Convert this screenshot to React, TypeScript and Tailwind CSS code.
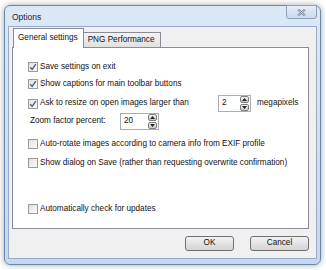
import React, { useState } from 'react';

const FONT = { fontFamily: '"Liberation Sans", Arial, sans-serif' };

function CheckBox({ checked }: { checked: boolean }) {
  return (
    <span className="w-[10px] h-[10px] shrink-0 border border-[#9a9a9a] bg-gradient-to-br from-[#e0e0e0] to-[#fcfcfc] flex items-center justify-center">
      {checked && (
        <svg width="8" height="8" viewBox="0 0 8 8">
          <path d="M1.2 4.2 L3.2 6.4 L6.8 1.2" fill="none" stroke="#4a5f97" strokeWidth="1.4" />
        </svg>
      )}
    </span>
  );
}

function Option({ label, checked }: { label: string; checked: boolean }) {
  return (
    <div className="flex items-center gap-[2px] h-[14px] pl-[15px]">
      <CheckBox checked={checked} />
      <span>{label}</span>
    </div>
  );
}

function SpinBox({ value, width }: { value: string; width: string }) {
  return (
    <div className={`${width} h-[17px] border border-[#abadb3] bg-white flex items-center justify-between pl-[3px] pr-[1px]`}>
      <span>{value}</span>
      <div className="flex flex-col gap-[1px]">
        <span className="w-[9px] h-[7px] rounded-[2px] border border-[#7d7d7d] bg-gradient-to-b from-[#f4f4f4] to-[#c9c9c9] flex items-center justify-center">
          <svg width="5" height="3" viewBox="0 0 5 3"><path d="M0 3 L2.5 0 L5 3 Z" fill="#222" /></svg>
        </span>
        <span className="w-[9px] h-[7px] rounded-[2px] border border-[#7d7d7d] bg-gradient-to-b from-[#f4f4f4] to-[#c9c9c9] flex items-center justify-center">
          <svg width="5" height="3" viewBox="0 0 5 3"><path d="M0 0 L2.5 3 L5 0 Z" fill="#222" /></svg>
        </span>
      </div>
    </div>
  );
}

export default function App() {
  const [tab] = useState(0);

  return (
    <div className="w-[326px] h-[270px] bg-white pt-[5px] pl-[4px] text-[8.2px] text-[#111]" style={FONT}>
      <div className="w-[317px] h-[260px] rounded-[6px] border border-[#6b86ab] bg-gradient-to-b from-[#dbe8f7] to-[#c6d8ef] shadow-[0_0_6px_rgba(0,0,0,0.35)] flex flex-col px-[3px] pb-[5px]">
        {/* title bar */}
        <div className="h-[20px] flex items-start justify-between shrink-0">
          <span className="pl-[4px] pt-[5px] text-[8.5px] text-[#1e1e1e]">Options</span>
          <div className="w-[31px] h-[14px] -mt-px rounded-b-[3px] border border-[#8ea2bd] bg-gradient-to-b from-[#e6eef8] to-[#cbd9ec] flex items-center justify-center">
            <svg width="9" height="7" viewBox="0 0 9 7">
              <path d="M1 0.5 L8 6.5 M8 0.5 L1 6.5" stroke="#6f7f95" strokeWidth="2.2" />
              <path d="M1 0.5 L8 6.5 M8 0.5 L1 6.5" stroke="#e8eef6" strokeWidth="0.8" />
            </svg>
          </div>
        </div>

        {/* client area */}
        <div className="flex-1 border border-[#97abc6] bg-[#f0f0f0] flex flex-col pl-[3px] pr-[7px]">
          <div className="flex items-end h-[20px] pl-px">
            <div className={`h-[20px] pl-[4px] pr-[5px] bg-white border border-b-0 border-[#898c95] flex items-center relative top-px ${tab === 0 ? 'z-10' : ''}`}>
              General settings
            </div>
            <div className="h-[15px] pl-[4px] pr-[5px] bg-gradient-to-b from-[#f3f3f3] to-[#e1e1e1] border border-l-0 border-b-0 border-[#898c95] flex items-center">
              PNG Performance
            </div>
          </div>

          <div className="h-[182px] bg-white border border-[#898c95] flex flex-col pt-[12px]">
            <Option checked label="Save settings on exit" />
            <div className="mt-[3px]">
              <Option checked label="Show captions for main toolbar buttons" />
            </div>
            <div className="mt-[4px] flex items-center h-[17px] pl-[15px]">
              <CheckBox checked />
              <span className="ml-[2px] w-[178px]">Ask to resize on open images larger than</span>
              <SpinBox value="2" width="w-[33px]" />
              <span className="ml-[6px]">megapixels</span>
            </div>
            <div className="mt-px flex items-center h-[17px] pl-[17px]">
              <span className="w-[90px]">Zoom factor percent:</span>
              <SpinBox value="20" width="w-[39px]" />
            </div>
            <div className="mt-[7px]">
              <Option label="Auto-rotate images according to camera info from EXIF profile" checked={false} />
            </div>
            <div className="mt-[5px]">
              <Option label="Show dialog on Save (rather than requesting overwrite confirmation)" checked={false} />
            </div>
            <div className="mt-[32px]">
              <Option label="Automatically check for updates" checked={false} />
            </div>
          </div>

          <div className="flex justify-end gap-[16px] mt-[7px]">
            <button className="w-[49px] h-[15px] rounded-[3px] border border-[#707070] bg-gradient-to-b from-[#f2f2f2] to-[#d4d4d4] flex items-center justify-center">
              OK
            </button>
            <button className="w-[59px] h-[15px] rounded-[3px] border border-[#707070] bg-gradient-to-b from-[#f2f2f2] to-[#d4d4d4] flex items-center justify-center">
              Cancel
            </button>
          </div>
        </div>
      </div>
    </div>
  );
}
